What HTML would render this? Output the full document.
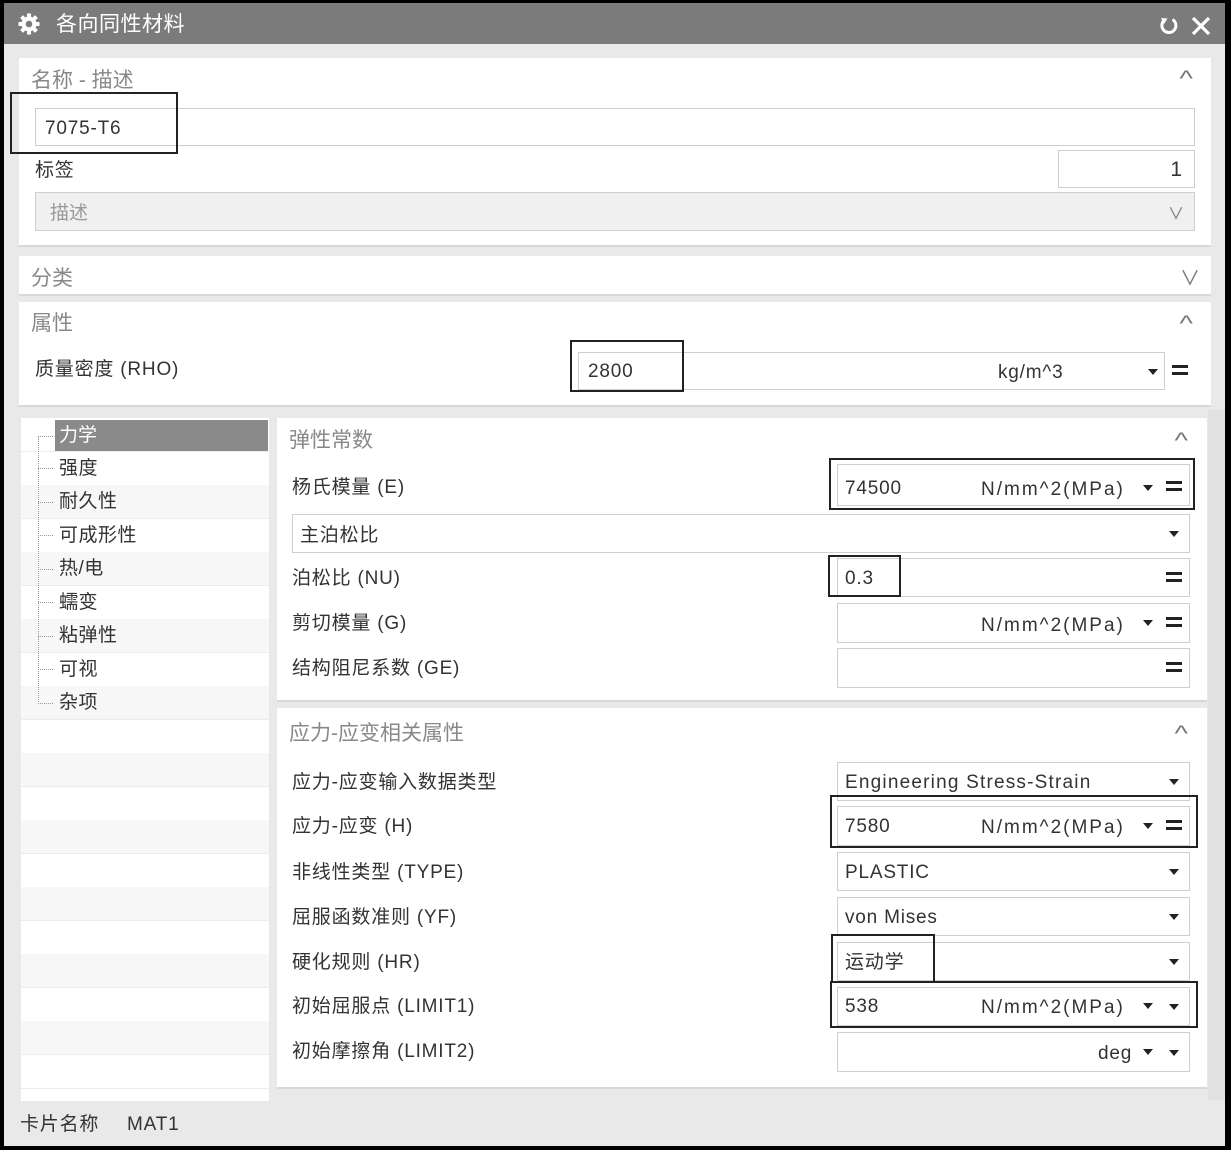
<!DOCTYPE html>
<html><head><meta charset="utf-8">
<style>
*{margin:0;padding:0;box-sizing:border-box}
body{width:1231px;height:1150px;background:#000;position:relative;overflow:hidden;font-family:"Liberation Sans","Noto Sans CJK SC",sans-serif;color:#333}
.a{position:absolute}
.win{left:4px;top:3px;width:1221px;height:1143px;background:#e9e9e9}
.title{left:4px;top:3px;width:1221px;height:41px;background:#7b7b7b;color:#fff;font-size:21px}
.p{background:#fff;box-shadow:0 2px 0 #d8d8d8}
.h{color:#888;font-size:21px;line-height:24px;transform:translateY(2px)}
.l{font-size:19px;line-height:22px;color:#333;letter-spacing:0.8px;transform:translateY(2px)}
.u{letter-spacing:2px}
.f{background:#fff;border:1px solid #cfcfcf;font-size:19px;line-height:22px;color:#333}
.bx{border:2.5px solid #222}
.car{color:#777;font-size:22px;line-height:22px;transform:scaleX(1.3)}
.tri{width:0;height:0;border-left:5px solid transparent;border-right:5px solid transparent;border-top:6px solid #222}
.eq{width:16px;height:10px;border-top:3px solid #222;border-bottom:3px solid #222}
.tr{left:21px;width:248px;height:33.5px;font-size:19px;line-height:34px;padding-left:38px;border-bottom:1px solid #ececec;letter-spacing:0.5px}
</style></head><body>
<div class="a win"></div>
<div class="a title">
 <svg class="a" style="left:14px;top:10px" width="22" height="22" viewBox="0 0 22 22"><g fill="#fff"><circle cx="11" cy="11" r="7.5"/><rect x="9" y="0.5" width="4" height="21"/><rect x="0.5" y="9" width="21" height="4"/><rect x="9" y="0.5" width="4" height="21" transform="rotate(45 11 11)"/><rect x="9" y="0.5" width="4" height="21" transform="rotate(-45 11 11)"/></g><circle cx="11" cy="11" r="3.3" fill="#7b7b7b"/></svg>
 <div class="a" style="left:52px;top:9px;line-height:26px;letter-spacing:0.5px">各向同性材料</div>
 <svg class="a" style="left:1154px;top:12px" width="22" height="22" viewBox="0 0 22 22"><path d="M14.5 4.5 A7 7 0 1 1 6 5.5" fill="none" stroke="#fff" stroke-width="3"/><path d="M3 3 L9.5 3.5 L6 9 Z" fill="#fff"/></svg>
 <svg class="a" style="left:1186px;top:12px" width="22" height="22" viewBox="0 0 22 22"><path d="M3 3 L19 19 M19 3 L3 19" stroke="#fff" stroke-width="3.2"/></svg>
</div>

<div class="a p" style="left:19px;top:58px;width:1192px;height:187px"></div>
<div class="a h" style="left:31px;top:67px">名称 - 描述</div>
<div class="a car" style="left:1181px;top:68px">^</div>
<div class="a f" style="left:35px;top:108px;width:1160px;height:38px;padding:9px 0 0 9px;letter-spacing:0.8px">7075-T6</div>
<div class="a bx" style="left:10px;top:92px;width:168px;height:62px"></div>
<div class="a l" style="left:35px;top:158px">标签</div>
<div class="a f" style="left:1058px;top:150px;width:137px;height:38px;padding:8px 12px 0 0;text-align:right;font-size:21px">1</div>
<div class="a f" style="left:35px;top:192px;width:1160px;height:39px;background:#f0f0f0;color:#999;padding:10px 0 0 14px">描述</div>
<div class="a" style="left:1168px;top:200px;color:#777;font-size:16px">&#x2228;</div>

<div class="a p" style="left:19px;top:256px;width:1192px;height:38px"></div>
<div class="a h" style="left:31px;top:265px">分类</div>
<div class="a" style="left:1180px;top:262px;color:#777;font-size:20px">&#x2228;</div>

<div class="a p" style="left:19px;top:302px;width:1192px;height:103px"></div>
<div class="a h" style="left:31px;top:310px">属性</div>
<div class="a car" style="left:1181px;top:313px">^</div>
<div class="a l" style="left:35px;top:357px">质量密度 (RHO)</div>
<div class="a f" style="left:578px;top:352px;width:587px;height:38px"></div>
<div class="a l" style="left:588px;top:359px">2800</div>
<div class="a l" style="left:998px;top:360px">kg/m^3</div>
<div class="a tri" style="left:1148px;top:369px"></div>
<div class="a eq" style="left:1172px;top:365px"></div>
<div class="a bx" style="left:570px;top:340px;width:114px;height:52px"></div>

<div class="a" style="left:21px;top:418px;width:248px;height:683px;background:#fff"></div>
<div class="a tr" style="top:418px;background:#fff"></div>
<div class="a" style="left:55px;top:420px;width:213px;height:31px;background:#8a8a8a"></div>
<div class="a" style="left:59px;top:423px;color:#fff;font-size:19px;line-height:26px">力学</div>
<div class="a tr" style="top:452px">强度</div>
<div class="a tr" style="top:485px;background:#f7f7f7">耐久性</div>
<div class="a tr" style="top:519px">可成形性</div>
<div class="a tr" style="top:552px;background:#f7f7f7">热/电</div>
<div class="a tr" style="top:586px">蠕变</div>
<div class="a tr" style="top:619px;background:#f7f7f7">粘弹性</div>
<div class="a tr" style="top:653px">可视</div>
<div class="a tr" style="top:686px;background:#f7f7f7">杂项</div>
<div class="a tr" style="top:720px"></div>
<div class="a tr" style="top:753px;background:#f7f7f7"></div>
<div class="a tr" style="top:787px"></div>
<div class="a tr" style="top:820px;background:#f7f7f7"></div>
<div class="a tr" style="top:854px"></div>
<div class="a tr" style="top:887px;background:#f7f7f7"></div>
<div class="a tr" style="top:921px"></div>
<div class="a tr" style="top:954px;background:#f7f7f7"></div>
<div class="a tr" style="top:988px"></div>
<div class="a tr" style="top:1021px;background:#f7f7f7"></div>
<div class="a tr" style="top:1055px"></div>
<div class="a" style="left:38px;top:436px;width:1px;height:268px;border-left:1px dotted #999"></div>
<svg class="a" style="left:38px;top:430px" width="16" height="280"><g stroke="#999" stroke-dasharray="1 1"><line x1="0" y1="6.5" x2="16" y2="6.5"/><line x1="0" y1="38.5" x2="16" y2="38.5"/><line x1="0" y1="72.5" x2="16" y2="72.5"/><line x1="0" y1="105.5" x2="16" y2="105.5"/><line x1="0" y1="139.5" x2="16" y2="139.5"/><line x1="0" y1="172.5" x2="16" y2="172.5"/><line x1="0" y1="206.5" x2="16" y2="206.5"/><line x1="0" y1="239.5" x2="16" y2="239.5"/><line x1="0" y1="273.5" x2="16" y2="273.5"/></g></svg>

<div class="a" style="left:1208px;top:410px;width:17px;height:690px;background:#e2e2e2"></div>

<div class="a p" style="left:277px;top:418px;width:930px;height:282px"></div>
<div class="a h" style="left:289px;top:427px">弹性常数</div>
<div class="a car" style="left:1176px;top:430px">^</div>
<div class="a l" style="left:292px;top:475px">杨氏模量 (E)</div>
<div class="a f" style="left:837px;top:464px;width:353px;height:42px"></div>
<div class="a l" style="left:845px;top:476px">74500</div>
<div class="a l u" style="left:981px;top:477px">N/mm^2(MPa)</div>
<div class="a tri" style="left:1143px;top:485px"></div>
<div class="a eq" style="left:1166px;top:481px"></div>
<div class="a bx" style="left:829px;top:458px;width:366px;height:52px"></div>

<div class="a f" style="left:292px;top:514px;width:898px;height:39px"></div>
<div class="a l" style="left:300px;top:523px">主泊松比</div>
<div class="a tri" style="left:1169px;top:531px"></div>

<div class="a l" style="left:292px;top:566px">泊松比 (NU)</div>
<div class="a f" style="left:837px;top:558px;width:353px;height:39px"></div>
<div class="a l" style="left:845px;top:566px">0.3</div>
<div class="a eq" style="left:1166px;top:572px"></div>
<div class="a bx" style="left:828px;top:555px;width:73px;height:42px"></div>

<div class="a l" style="left:292px;top:611px">剪切模量 (G)</div>
<div class="a f" style="left:837px;top:603px;width:353px;height:40px"></div>
<div class="a l u" style="left:981px;top:613px">N/mm^2(MPa)</div>
<div class="a tri" style="left:1143px;top:620px"></div>
<div class="a eq" style="left:1166px;top:617px"></div>

<div class="a l" style="left:292px;top:656px">结构阻尼系数 (GE)</div>
<div class="a f" style="left:837px;top:648px;width:353px;height:40px"></div>
<div class="a eq" style="left:1166px;top:662px"></div>

<div class="a p" style="left:277px;top:708px;width:930px;height:379px"></div>
<div class="a h" style="left:289px;top:720px">应力-应变相关属性</div>
<div class="a car" style="left:1176px;top:723px">^</div>

<div class="a l" style="left:292px;top:770px">应力-应变输入数据类型</div>
<div class="a f" style="left:837px;top:762px;width:353px;height:39px"></div>
<div class="a l" style="left:845px;top:770px;letter-spacing:1.2px">Engineering Stress-Strain</div>
<div class="a tri" style="left:1169px;top:779px"></div>

<div class="a l" style="left:292px;top:814px">应力-应变 (H)</div>
<div class="a f" style="left:837px;top:806px;width:353px;height:40px"></div>
<div class="a l" style="left:845px;top:814px">7580</div>
<div class="a l u" style="left:981px;top:815px">N/mm^2(MPa)</div>
<div class="a tri" style="left:1143px;top:823px"></div>
<div class="a eq" style="left:1166px;top:820px"></div>
<div class="a bx" style="left:830px;top:795px;width:368px;height:53px"></div>

<div class="a l" style="left:292px;top:860px">非线性类型 (TYPE)</div>
<div class="a f" style="left:837px;top:852px;width:353px;height:39px"></div>
<div class="a l" style="left:845px;top:860px">PLASTIC</div>
<div class="a tri" style="left:1169px;top:869px"></div>

<div class="a l" style="left:292px;top:905px">屈服函数准则 (YF)</div>
<div class="a f" style="left:837px;top:897px;width:353px;height:39px"></div>
<div class="a l" style="left:845px;top:905px">von Mises</div>
<div class="a tri" style="left:1169px;top:914px"></div>

<div class="a l" style="left:292px;top:950px">硬化规则 (HR)</div>
<div class="a f" style="left:837px;top:942px;width:353px;height:39px"></div>
<div class="a l" style="left:845px;top:950px">运动学</div>
<div class="a tri" style="left:1169px;top:959px"></div>
<div class="a bx" style="left:831px;top:934px;width:104px;height:49px"></div>

<div class="a l" style="left:292px;top:994px">初始屈服点 (LIMIT1)</div>
<div class="a f" style="left:837px;top:987px;width:353px;height:39px"></div>
<div class="a l" style="left:845px;top:994px">538</div>
<div class="a l u" style="left:981px;top:995px">N/mm^2(MPa)</div>
<div class="a tri" style="left:1143px;top:1003px"></div>
<div class="a tri" style="left:1169px;top:1004px"></div>
<div class="a bx" style="left:830px;top:981px;width:368px;height:47px"></div>

<div class="a l" style="left:292px;top:1039px">初始摩擦角 (LIMIT2)</div>
<div class="a f" style="left:837px;top:1032px;width:353px;height:40px"></div>
<div class="a l" style="left:1098px;top:1041px">deg</div>
<div class="a tri" style="left:1143px;top:1049px"></div>
<div class="a tri" style="left:1169px;top:1050px"></div>

<div class="a l" style="left:20px;top:1112px">卡片名称</div>
<div class="a l" style="left:127px;top:1112px">MAT1</div>
</body></html>
